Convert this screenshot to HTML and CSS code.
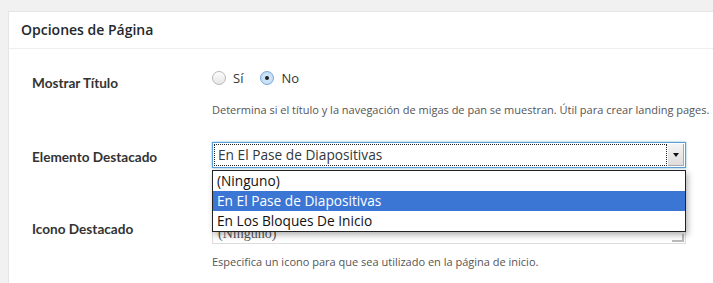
FILE: index.html
```html
<!DOCTYPE html>
<html lang="es">
<head>
<meta charset="utf-8">
<title>Opciones de Página</title>
<link rel="stylesheet" href="styles.css">
</head>
<body>
<div class="panel">
  <div class="panel-header">Opciones de Página</div>
  <div class="panel-body">
    <div class="row row-title">
      <div class="label">Mostrar Título</div>
      <div class="field">
        <div class="radios">
          <span class="radio"></span><span class="radio-text">Sí</span>
          <span class="radio checked"><span class="dot"></span></span><span class="radio-text">No</span>
        </div>
        <p class="desc desc-1">Determina si el título y la navegación de migas de pan se muestran. Útil para crear landing pages.</p>
      </div>
    </div>
    <div class="row row-feature">
      <div class="label">Elemento Destacado</div>
      <div class="field">
        <div class="select focused">
          <span class="select-value">En El Pase de Diapositivas</span>
          <span class="select-arrow"></span>
        </div>
        <ul class="dropdown">
          <li>(Ninguno)</li>
          <li class="hl">En El Pase de Diapositivas</li>
          <li>En Los Bloques De Inicio</li>
        </ul>
      </div>
    </div>
    <div class="row row-icon">
      <div class="label">Icono Destacado</div>
      <div class="field">
        <div class="select plain">
          <span class="select-value serif">(Ninguno)</span>
          <span class="grip"></span>
        </div>
        <p class="desc desc-2">Especifica un icono para que sea utilizado en la página de inicio.</p>
      </div>
    </div>
  </div>
</div>
</body>
</html>
```
FILE: styles.css
```css
html, body {
  margin: 0;
  padding: 0;
}
body {
  background: #f1f1f1;
  padding: 11px 0 0 8px;
  overflow: hidden;
  font-family: "Open Sans", "Noto Sans", sans-serif;
  color: #444;
}
.panel {
  background: #fff;
  border: 1px solid #e5e5e5;
  border-right: none;
  margin-right: -40px;
  height: 300px;
}
.panel-header {
  height: 36px;
  line-height: 36px;
  padding-left: 12px;
  border-bottom: 1px solid #eee;
  font-size: 14px;
  font-weight: 600;
  color: #23282d;
}
.panel-body {
  padding-left: 23px;
}
.row {
  display: flex;
}
.label {
  width: 180px;
  flex: none;
  font-family: "Lato", "Liberation Sans", sans-serif;
  font-weight: 700;
  font-size: 13.6px;
  line-height: 17px;
  color: #333;
}
.field {
  position: relative;
  width: 474px;
}
.row-title {
  padding-top: 20px;
}
.row-title .label {
  padding-top: 6px;
}
.radios {
  display: flex;
  align-items: center;
  height: 17px;
  font-size: 13px;
  color: #333;
}
.radio {
  width: 14px;
  height: 14px;
  box-sizing: border-box;
  border-radius: 50%;
  border: 1px solid #b4b9be;
  background: linear-gradient(#fdfdfd, #e6e6e6);
  display: inline-flex;
  align-items: center;
  justify-content: center;
}
.radio.checked {
  border-color: #7aa7d8;
  background: radial-gradient(circle, #d9ecfb 0, #b8d7f3 100%);
  margin-left: 17px;
}
.dot {
  width: 4px;
  height: 4px;
  border-radius: 50%;
  background: #222;
}
.radio-text {
  margin-left: 7px;
}
.desc {
  margin: 0;
  font-size: 11px;
  line-height: 16px;
  color: #555;
  white-space: nowrap;
}
.desc-1 {
  margin-top: 16px;
}
.row-feature {
  padding-top: 24px;
}
.row-feature .label {
  padding-top: 7px;
}
.select {
  box-sizing: border-box;
  height: 26px;
  width: 474px;
  display: flex;
  align-items: center;
  position: relative;
  font-size: 13.7px;
  color: #32373c;
}
.select.focused {
  border: 1px solid #5b9dd9;
  box-shadow: 0 0 2px rgba(30, 140, 190, 0.6);
  padding: 1px;
}
.select.focused .select-value {
  flex: 1;
  height: 22px;
  line-height: 20px;
  box-sizing: border-box;
  border: 1px dotted #222;
  padding-left: 3px;
}
.select-arrow {
  width: 16px;
  height: 22px;
  margin-left: 1px;
  background: linear-gradient(#f4f4f4, #dcdcdc);
  box-shadow: inset -1px -1px 0 #aaa;
  position: relative;
}
.select-arrow::after {
  content: "";
  position: absolute;
  left: 5px;
  top: 9px;
  border-left: 3px solid transparent;
  border-right: 3px solid transparent;
  border-top: 4px solid #111;
}
.dropdown {
  position: absolute;
  left: 0;
  top: 28px;
  width: 474px;
  box-sizing: border-box;
  margin: 0;
  padding: 0;
  list-style: none;
  background: #fff;
  border: 1px solid #222;
  box-shadow: 2px 3px 6px rgba(0, 0, 0, 0.3);
  z-index: 2;
  font-size: 13.7px;
  color: #111;
}
.dropdown li {
  height: 20px;
  line-height: 20px;
  padding-left: 4px;
}
.dropdown li.hl {
  background: #3c76d4;
  color: #fff;
}
.row-icon {
  padding-top: 50px;
}
.row-icon .label {
  padding-top: 3px;
}
.select.plain {
  border: 1px solid #ddd;
  box-shadow: inset 0 1px 2px rgba(0, 0, 0, 0.07);
  padding-left: 5px;
}
.serif {
  font-family: "Liberation Serif", serif;
  color: #555;
  font-size: 14px;
  padding-top: 6px;
}
.grip {
  position: absolute;
  right: 1px;
  bottom: 1px;
  width: 10px;
  height: 6px;
  border-right: 2px solid #bbb;
  border-bottom: 2px solid #bbb;
}
.desc-2 {
  margin-top: 10px;
}
```
